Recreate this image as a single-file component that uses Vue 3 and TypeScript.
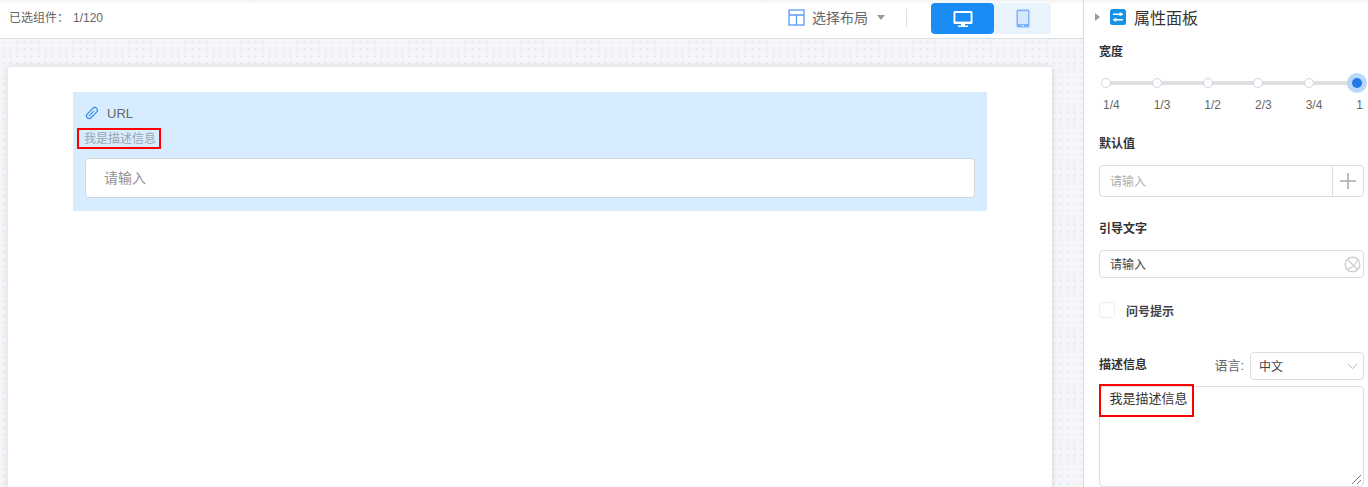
<script setup lang="ts">
const marks: string[] = ['1/4', '1/3', '1/2', '2/3', '3/4', '1']
</script>

<template>
  <div class="page">
    <main class="main">
      <header class="topbar">
        <span class="count">已选组件：<i class="num">1/120</i></span>
        <div class="tools">
          <svg class="layout-icon" width="17" height="17" viewBox="0 0 17 17" fill="none" stroke="#5a9cf5" stroke-width="1.3">
            <rect x="1" y="1" width="15" height="15" />
            <path d="M1 6h15M8.5 6v10" />
          </svg>
          <span class="layout-text">选择布局</span>
          <span class="caret"></span>
          <span class="sep"></span>
          <div class="devices">
            <button class="dev on">
              <svg width="20" height="18" viewBox="0 0 20 18">
                <rect x="0.5" y="1" width="19" height="13" rx="1.5" fill="#fff" />
                <rect x="2.4" y="3" width="15.2" height="8.6" fill="#1a8cf5" />
                <path d="M8 14h4v1.6h3V17H5v-1.4h3z" fill="#fff" />
              </svg>
            </button>
            <button class="dev">
              <svg width="14" height="19" viewBox="0 0 14 19">
                <rect x="0.5" y="0.5" width="13" height="18" rx="1.6" fill="#7fb2fa" />
                <rect x="2" y="2.2" width="10" height="12.8" fill="#d5e6fd" />
                <circle cx="7" cy="16.8" r="0.8" fill="#fff" />
              </svg>
            </button>
          </div>
        </div>
      </header>
      <section class="canvas">
        <div class="card">
          <div class="field">
            <div class="field-title">
              <svg width="16" height="16" viewBox="0 0 16 16" fill="none" stroke="#2f8bec" stroke-width="1.1" stroke-linecap="round">
                <g transform="rotate(45 8 8)">
                  <path d="M8 5.500v6.500M5.300 11.500V4.200a2.700 2.700 0 0 1 5.400 0v7.800a2.700 2.700 0 0 1-5.400 0" />
                </g>
              </svg>
              <span>URL</span>
            </div>
            <div class="field-desc">我是描述信息</div>
            <div class="field-input">请输入</div>
            <span class="red-box left-box"></span>
          </div>
        </div>
      </section>
    </main>

    <aside class="panel">
      <div class="panel-head">
        <span class="tri"></span>
        <svg width="16" height="16" viewBox="0 0 16 16">
          <rect width="16" height="16" rx="2.5" fill="#1592e6" />
          <path d="M3 5.200h10M3 10.800h10" stroke="#fff" stroke-width="1.500" />
          <rect x="9.500" y="3.600" width="2" height="3.200" fill="#fff" />
          <rect x="4.500" y="9.200" width="2" height="3.200" fill="#fff" />
        </svg>
        <span class="panel-title">属性面板</span>
      </div>

      <div class="label first">宽度</div>
      <div class="slider">
        <div class="track">
          <span v-for="(m, i) in marks" :key="m" class="dot" :class="{ active: i === marks.length - 1 }"></span>
        </div>
        <div class="marks">
          <span v-for="m in marks" :key="m">{{ m }}</span>
        </div>
      </div>

      <div class="label second">默认值</div>
      <div class="box default-box">
        <span class="ph">请输入</span>
        <span class="plus">
          <svg width="16" height="16" viewBox="0 0 16 16"><path d="M8 0v16M0 8h16" stroke="#a8a8a8" stroke-width="1.500" /></svg>
        </span>
      </div>

      <div class="label third">引导文字</div>
      <div class="box guide-box">
        <span class="val">请输入</span>
        <svg class="clear" width="17" height="17" viewBox="0 0 17 17" fill="none" stroke="#cfcfcf" stroke-width="1.400">
          <circle cx="8.500" cy="8.500" r="7.300" />
          <path d="M3.400 3.400l10.200 10.200M13.400 3.200C13 7 9 11 3.400 13.400" />
        </svg>
      </div>

      <label class="check-row">
        <span class="check"></span>
        <span class="check-text">问号提示</span>
      </label>

      <div class="desc-row">
        <span class="label inline">描述信息</span>
        <span class="lang">语言:</span>
        <div class="select">
          <span class="val">中文</span>
          <svg width="11" height="7" viewBox="0 0 11 7" fill="none" stroke="#a9bcc4" stroke-width="1"><path d="M.8.800 5.500 5.500 10.200.800" /></svg>
        </div>
      </div>
      <div class="textarea">
        <span class="ta-text">我是描述信息</span>
        <svg class="grip" width="12" height="12" viewBox="0 0 12 12" stroke="#777" stroke-width="1"><path d="M2 11 11 2M7 11l4-4" /></svg>
        <span class="red-box right-box"></span>
      </div>
    </aside>
  </div>
</template>

<style>
html, body { margin: 0; background: #fff; overflow: hidden; }
</style>

<style scoped>
.page {
  display: flex;
  width: 1368px;
  height: 487px;
  overflow: hidden;
  font-family: "Liberation Sans", "Noto Sans CJK SC", sans-serif;
  color: #555;
  background: #fff;
}
.main { width: 1083px; display: flex; flex-direction: column; flex: none; }
.topbar {
  height: 35px;
  padding: 0 0 3px 9px;
  flex: none;
  display: flex;
  align-items: center;
  justify-content: space-between;
  background: linear-gradient(#f3f3f3, #fff 5px);
  border-bottom: 1px solid #dcdcdc;
}
.count { font-size: 12px; color: #666; margin-top: -2px; }
.num { font-style: normal; margin-left: 4px; }
.tools { display: flex; align-items: center; margin-right: 32px; }
.layout-icon { margin: 0 7px 0 2px; }
.layout-text { font-size: 14px; color: #666; margin-top: -2px; }
.caret {
  width: 0; height: 0; margin: 0 0 0 9px;
  border-left: 4px solid transparent;
  border-right: 4px solid transparent;
  border-top: 5px solid #999;
}
.sep { width: 1px; height: 18px; background: #e0e0e0; margin: 0 24px 0 21px; }
.devices { display: flex; height: 31px; margin-top: 2px; }
.dev {
  width: 57px; padding: 0; border: 0;
  display: flex; align-items: center; justify-content: center;
  background: #e8f3fe;
  border-radius: 0 4px 4px 0;
}
.dev.on { width: 63px; background: #1a8cf5; border-radius: 4px; }
.canvas {
  flex: 1;
  min-height: 0;
  padding: 28px 31px 0 8px;
  background-color: #f4f6fa;
  background-image: radial-gradient(circle, #e9ebf1 1.1px, transparent 1.2px);
  background-size: 7px 7px;
}
.card {
  height: 100%;
  padding: 25px 65px 0;
  background: #fff;
  border-radius: 3px 3px 0 0;
  box-shadow: 0 0 6px rgba(0, 0, 0, 0.14);
}
.field {
  position: relative;
  height: 119px;
  box-sizing: border-box;
  padding: 11px 12px 0;
  background: #d7ecfe;
}
.field-title { display: flex; align-items: center; height: 20px; font-size: 13px; color: #666; }
.field-title svg { margin: 0 7px 0 -1px; }
.field-desc { margin: 5px 0 0 -1px; height: 22px; line-height: 22px; font-size: 12px; color: #9aa5ae; }
.field-input {
  margin-top: 8px;
  height: 40px;
  line-height: 38px;
  box-sizing: border-box;
  padding-left: 18px;
  font-size: 14px;
  color: #8f8f98;
  background: #fff;
  border: 1px solid #cfd6de;
  border-radius: 4px;
}
.red-box { position: absolute; border: 2px solid #f00; box-sizing: border-box; pointer-events: none; }
.left-box { left: 4px; top: 36px; width: 84px; height: 21px; }
.panel {
  flex: 1;
  box-sizing: border-box;
  padding: 0 4px 0 15px;
  border-left: 1px solid #dcdcdc;
  background: linear-gradient(#f5f5f5, #fff 5px);
  font-size: 12px;
  color: #333;
}
.panel-head { height: 37px; display: flex; align-items: center; padding-bottom: 3px; box-sizing: border-box; margin-left: -4px; }
.tri {
  width: 0; height: 0; margin: 0 10px 0 0;
  border-top: 4px solid transparent;
  border-bottom: 4px solid transparent;
  border-left: 5px solid #999;
}
.panel-title { margin-left: 8px; font-size: 16px; color: #333; }
.label { font-size: 12px; font-weight: 700; color: #333; line-height: 18px; }
.first { margin-top: 6px; }
.slider { margin-top: 12px; }
.track {
  display: flex;
  gap: 40.8px;
  align-items: center;
  height: 20px;
  margin: 0 0 0 2px;
  background: linear-gradient(#dfdfdf, #dfdfdf) center / calc(100% - 8px) 4px no-repeat;
}
.dot {
  width: 10px; height: 10px;
  flex: none;
  box-sizing: border-box;
  background: #fff;
  border: 1px solid #ccd6e6;
  border-radius: 50%;
}
.dot.active {
  background: #2079e6;
  border: 0;
  box-shadow: 0 0 0 5px #b9d6fb;
  margin-left: -3px;
}
.marks {
  display: flex;
  justify-content: space-between;
  margin-top: 5px;
  padding: 0 1px 0 4px;
  font-size: 12px;
  color: #666;
  line-height: 15px;
}
.second { margin-top: 22px; }
.box {
  display: flex;
  align-items: center;
  box-sizing: border-box;
  border: 1px solid #ddd;
  border-radius: 4px;
  padding-left: 10px;
  color: #444;
}
.default-box { margin-top: 12px; height: 32px; }
.ph { flex: 1; color: #b0b0b0; padding-bottom: 2px; }
.val { padding-bottom: 2px; }
.plus {
  width: 30px; height: 100%;
  display: flex; align-items: center; justify-content: center;
  border-left: 1px solid #ddd;
}
.third { margin-top: 23px; }
.guide-box { margin-top: 12px; height: 28px; justify-content: space-between; padding-right: 2px; }
.check-row { display: flex; align-items: center; margin-top: 23px; height: 18px; }
.check {
  width: 16px; height: 16px; box-sizing: border-box;
  border: 1px solid #eee; border-radius: 3px; background: #fff;
}
.check-text { margin-left: 11px; font-weight: 700; color: #444; }
.desc-row { display: flex; align-items: center; margin-top: 33px; height: 28px; }
.inline { flex: 1; margin-top: -2px; }
.lang { margin: -3px 6px 0 0; color: #666; font-size: 13px; }
.select {
  width: 114px; height: 28px; box-sizing: border-box;
  display: flex; align-items: center; justify-content: space-between;
  padding: 0 5px 0 8px;
  border: 1px solid #ddd; border-radius: 4px;
  color: #444;
}
.textarea {
  position: relative;
  height: 101px;
  margin-top: 6px;
  box-sizing: border-box;
  padding: 1px 10px 0;
  border: 1px solid #ddd;
  border-radius: 4px;
  font-size: 13px;
  line-height: 21px;
  color: #333;
}
.ta-text { display: block; margin-left: -0.5px; }
.grip { position: absolute; right: 1px; bottom: 1px; }
.right-box { left: -1px; top: -3px; width: 95px; height: 33px; }
</style>
